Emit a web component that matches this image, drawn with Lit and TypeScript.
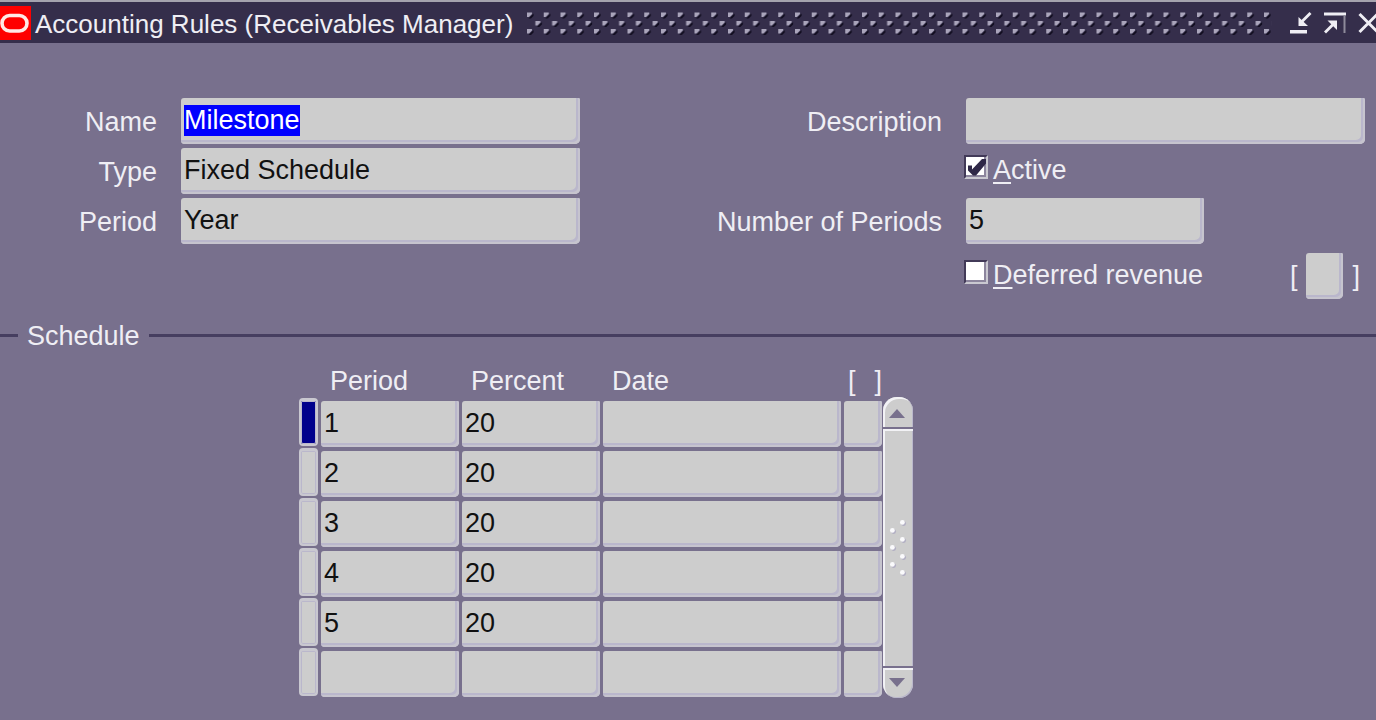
import { LitElement, html, css, svg } from "lit";
import { customElement, state, query } from "lit/decorators.js";
import { classMap } from "lit/directives/class-map.js";

interface ScheduleLine {
  period: string;
  percent: string;
  date: string;
}

const field = css`
  .field {
    box-sizing: border-box;
    display: block;
    width: 100%;
    height: 46px;
    margin: 0;
    padding: 0 5px 2px 3px;
    border: 0;
    border-radius: 3px 2px 5px 4px;
    outline: none;
    background: #cdcdcd;
    box-shadow: inset -2px -2px 0 #c6c4ce, inset -4px -4px 0 #bab7cc;
    color: #111;
    font: inherit;
    line-height: 36px;
  }
  .field::selection {
    background: #0000ff;
    color: #ffffff;
  }
`;

@customElement("title-bar")
export class TitleBar extends LitElement {
  static styles = css`
    :host {
      display: block;
    }
    .bar {
      box-sizing: border-box;
      display: flex;
      align-items: center;
      height: 43px;
      overflow: hidden;
      border-top: 2px solid #a5a3ae;
      background: #352e4b;
      color: #efeef4;
    }
    .logo {
      flex: none;
      width: 31px;
      height: 34px;
    }
    .title {
      flex: none;
      margin: 0 14px 0 4px;
      padding-top: 2px;
      font-size: 26px;
      line-height: 30px;
      font-weight: 400;
      white-space: nowrap;
    }
    .grip {
      flex: 1;
      min-width: 0;
      height: 24px;
    }
    .tools {
      flex: none;
      display: flex;
      gap: 12px;
      margin: 0 -4px 0 18px;
    }
    .tool {
      width: 22px;
      height: 24px;
      padding: 0;
      border: 0;
      background: none;
      color: inherit;
    }
    .glyph {
      display: block;
      width: 22px;
      height: 24px;
    }
  `;

  render() {
    return html`
      <header class="bar">
        <svg class="logo" viewBox="0 0 31 34" aria-hidden="true">
          <rect width="31" height="34" fill="#fe0000" />
          <rect x="2" y="9.5" width="25" height="15.5" rx="7.7" fill="none" stroke="#ffe9e6" stroke-width="3.6" />
        </svg>
        <h1 class="title">Accounting Rules (Receivables Manager)</h1>
        <svg class="grip" aria-hidden="true">
          <defs>
            <g id="dot">
              <path d="M1.500 6.500L6.500 1.500V4L4 6.500z" fill="#100c1e" />
              <path d="M0 0.500h5v1.500l-3 3H0z" fill="#aaa5bb" />
            </g>
            <pattern id="dots" width="16.75" height="24" patternUnits="userSpaceOnUse">
              <use href="#dot" y="1" />
              <use href="#dot" x="8.4" y="9.5" />
              <use href="#dot" y="17.500" />
            </pattern>
          </defs>
          <rect width="100%" height="24" fill="url(#dots)" />
        </svg>
        <div class="tools">
          <button class="tool" aria-label="Minimize">
            <svg class="glyph" viewBox="0 0 22 24">
              <path d="M0 19h17v3.500H0z" fill="currentColor" />
              <path d="M20.500 2L10.500 12" fill="none" stroke="currentColor" stroke-width="2.800" />
              <path d="M8.500 6v9H18z" fill="currentColor" />
            </svg>
          </button>
          <button class="tool" aria-label="Maximize">
            <svg class="glyph" viewBox="0 0 22 24">
              <path d="M0 1.500h22v3H0z" fill="currentColor" />
              <path d="M19.500 4.500h2v17.500h-2z" fill="#8e8a9b" />
              <path d="M1 21.500L11 11.500" fill="none" stroke="currentColor" stroke-width="2.800" />
              <path d="M3.500 9.500H13V19z" fill="currentColor" />
            </svg>
          </button>
          <button class="tool" aria-label="Close">
            <svg class="glyph" viewBox="0 0 22 24">
              <path d="M1.500 3l18 18M19.500 3l-18 18" stroke="currentColor" stroke-width="3" />
            </svg>
          </button>
        </div>
      </header>
    `;
  }
}

@customElement("check-field")
export class CheckField extends LitElement {
  static properties = {
    label: { type: String },
    checked: { type: Boolean },
  };
  declare label: string;
  declare checked: boolean;

  static styles = css`
    :host {
      display: block;
    }
    .check {
      display: flex;
      align-items: flex-start;
      gap: 5px;
      line-height: 31px;
      white-space: nowrap;
    }
    .mark {
      display: grid;
      width: 24px;
      height: 24px;
    }
    .box,
    .tick {
      grid-area: 1 / 1;
      width: 24px;
      height: 24px;
    }
    .box {
      appearance: none;
      box-sizing: border-box;
      margin: 0;
      border: 2px solid;
      border-color: #423a58 #c9c8d0 #c9c8d0 #423a58;
      outline: none;
      background: #fff;
      box-shadow: inset -2px -2px 0 #8c859d;
    }
    .tick {
      pointer-events: none;
      visibility: hidden;
    }
    .box:checked + .tick {
      visibility: visible;
    }
    .key {
      text-decoration: underline;
      text-decoration-thickness: 2px;
      text-underline-offset: 3px;
    }
  `;

  render() {
    return html`
      <label class="check">
        <span class="mark">
          <input class="box" type="checkbox" .checked=${this.checked} />
          <svg class="tick" viewBox="0 0 24 24" aria-hidden="true">
            <path d="M4 10.500h4v4L18 4h4v4.500L12 20.500H9L4 15.500z" fill="#2f2847" />
          </svg>
        </span>
        <span><span class="key">${this.label.slice(0, 1)}</span>${this.label.slice(1)}</span>
      </label>
    `;
  }
}

@customElement("rule-form")
export class RuleForm extends LitElement {
  @query("#name") private nameField!: HTMLInputElement;

  static styles = [
    field,
    css`
      :host {
        display: block;
      }
      .form {
        display: grid;
        grid-template-columns: 157px minmax(0, 1fr) 338px minmax(0, 1fr);
        grid-auto-rows: 46px;
        column-gap: 24px;
        row-gap: 4px;
        padding: 55px 11px 0 0;
      }
      .label {
        padding-top: 9px;
        line-height: 31px;
        text-align: right;
        white-space: nowrap;
      }
      .short {
        width: 238px;
      }
      .check-cell {
        margin-left: -2px;
        padding-top: 7px;
      }
      .last {
        grid-column: 4;
        display: flex;
        justify-content: space-between;
        padding-top: 5px;
      }
      .flex {
        display: flex;
        gap: 9px;
        padding-right: 5px;
      }
      .bracket {
        padding-top: 8px;
        line-height: 31px;
      }
      .tiny {
        width: 37px;
      }
    `,
  ];

  firstUpdated() {
    this.nameField.focus();
    this.nameField.select();
  }

  render() {
    return html`
      <form class="form">
        <label class="label" for="name">Name</label>
        <input class="field" id="name" value="Milestone" spellcheck="false" />
        <label class="label" for="description">Description</label>
        <input class="field" id="description" />

        <label class="label" for="type">Type</label>
        <input class="field" id="type" value="Fixed Schedule" />
        <span></span>
        <check-field class="check-cell" label="Active" .checked=${true}></check-field>

        <label class="label" for="period">Period</label>
        <input class="field" id="period" value="Year" />
        <label class="label" for="periods">Number of Periods</label>
        <input class="field short" id="periods" value="5" />

        <div class="last">
          <check-field class="check-cell" label="Deferred revenue"></check-field>
          <div class="flex">
            <span class="bracket">[</span>
            <input class="field tiny" aria-label="Descriptive flexfield" />
            <span class="bracket">]</span>
          </div>
        </div>
      </form>
    `;
  }
}

@customElement("schedule-block")
export class ScheduleBlock extends LitElement {
  @state() private current = 0;

  private lines: ScheduleLine[] = [
    { period: "1", percent: "20", date: "" },
    { period: "2", percent: "20", date: "" },
    { period: "3", percent: "20", date: "" },
    { period: "4", percent: "20", date: "" },
    { period: "5", percent: "20", date: "" },
    { period: "", percent: "", date: "" },
  ];

  static styles = [
    field,
    css`
      :host {
        display: block;
      }
      .heading {
        display: flex;
        align-items: center;
        gap: 9px;
        padding-top: 27px;
      }
      .rule {
        height: 3px;
        margin-bottom: 3px;
        background: #463e60;
      }
      .lead {
        width: 18px;
      }
      .rest {
        flex: 1;
      }
      .caption {
        margin: 0;
        font-size: 27px;
        line-height: 31px;
        font-weight: 400;
      }
      .records {
        display: flex;
        align-items: flex-start;
        padding: 9px 0 0 296px;
      }
      .table {
        table-layout: fixed;
        width: 589px;
        border-collapse: separate;
        border-spacing: 3px 4px;
      }
      .marker-col {
        width: 19px;
      }
      .value-col {
        width: 138px;
      }
      .date-col {
        width: 238px;
      }
      .flex-col {
        width: 38px;
      }
      .head {
        height: 32px;
        padding: 0 0 0 9px;
        font-weight: 400;
        line-height: 32px;
        text-align: left;
        vertical-align: top;
      }
      .flex-head {
        padding-left: 4px;
      }
      .pair {
        display: flex;
        justify-content: space-between;
      }
      .cell {
        height: 46px;
        padding: 0;
        vertical-align: top;
      }
      .marker {
        box-sizing: border-box;
        display: block;
        width: 19px;
        height: 48px;
        margin: -3px 0 0;
        padding: 0;
        border: 2px solid #c9c8d0;
        border-top-width: 3px;
        border-radius: 4px;
        background: #cdcdcd;
        box-shadow: inset 0 0 0 1px #bab7cc;
      }
      .marker.on {
        background: #00008c;
      }
      .scroll {
        display: flex;
        flex-direction: column;
        align-self: stretch;
        width: 30px;
        margin: 36px 0 3px -2px;
        overflow: hidden;
        border-radius: 14px;
        background: #cdcdcd;
        box-shadow: inset 2px 2px 0 #f2f2f5, inset -1px -1px 0 #bab7cc;
      }
      .step {
        box-sizing: border-box;
        height: 32px;
        padding: 0;
        border: 0;
        background: none;
      }
      .up {
        border-bottom: 2px solid #78708d;
      }
      .down {
        border-top: 2px solid #78708d;
        box-shadow: inset 0 2px 0 #f2f2f5;
      }
      .arrow {
        display: block;
        width: 30px;
        height: 30px;
      }
      .track {
        flex: 1;
        display: flex;
        align-items: center;
        justify-content: center;
        border-top: 2px solid #f2f2f5;
      }
      .thumb {
        width: 20px;
        height: 60px;
      }
    `,
  ];

  private renderLine(line: ScheduleLine, index: number) {
    const n = index + 1;
    return html`
      <tr>
        <td class="cell">
          <button
            class=${classMap({ marker: true, on: index === this.current })}
            aria-label="Select record ${n}"
            @click=${() => (this.current = index)}
          ></button>
        </td>
        <td class="cell"><input class="field" aria-label="Period ${n}" .value=${line.period} /></td>
        <td class="cell"><input class="field" aria-label="Percent ${n}" .value=${line.percent} /></td>
        <td class="cell"><input class="field" aria-label="Date ${n}" .value=${line.date} /></td>
        <td class="cell"><input class="field" aria-label="Flexfield ${n}" /></td>
      </tr>
    `;
  }

  render() {
    const dots = [
      [12, 1], [2, 9], [12, 18], [2, 26], [12, 35], [2, 43], [12, 51],
    ];
    return html`
      <section>
        <div class="heading">
          <span class="rule lead"></span>
          <h2 class="caption">Schedule</h2>
          <span class="rule rest"></span>
        </div>
        <div class="records">
          <table class="table">
            <colgroup>
              <col class="marker-col" />
              <col class="value-col" />
              <col class="value-col" />
              <col class="date-col" />
              <col class="flex-col" />
            </colgroup>
            <thead>
              <tr>
                <td></td>
                <th class="head">Period</th>
                <th class="head">Percent</th>
                <th class="head">Date</th>
                <th class="head flex-head"><div class="pair"><span>[</span><span>]</span></div></th>
              </tr>
            </thead>
            <tbody>
              ${this.lines.map((line, i) => this.renderLine(line, i))}
            </tbody>
          </table>
          <div class="scroll">
            <button class="step up" aria-label="Scroll up">
              <svg class="arrow" viewBox="0 0 30 30"><path d="M6 21L14 12L22 21z" fill="#78708d" /></svg>
            </button>
            <div class="track">
              <svg class="thumb" viewBox="0 0 20 60" aria-hidden="true">
                ${dots.map(
                  ([x, y]) => svg`
                    <circle cx=${x + 3.6} cy=${y + 3.6} r="2.4" fill="#b0adc2" />
                    <circle cx=${x + 2.4} cy=${y + 2.4} r="2.4" fill="#fafafc" />`
                )}
              </svg>
            </div>
            <button class="step down" aria-label="Scroll down">
              <svg class="arrow" viewBox="0 0 30 30"><path d="M6 10L14 19L22 10z" fill="#78708d" /></svg>
            </button>
          </div>
        </div>
      </section>
    `;
  }
}

@customElement("app-root")
export class AppRoot extends LitElement {
  static styles = css`
    :host {
      display: block;
      min-height: 100vh;
      background: #78708d;
      color: #efeef4;
      font-family: "Liberation Sans", Arial, sans-serif;
      font-size: 27px;
    }
  `;

  render() {
    return html`
      <title-bar></title-bar>
      <main>
        <rule-form></rule-form>
        <schedule-block></schedule-block>
      </main>
    `;
  }
}
